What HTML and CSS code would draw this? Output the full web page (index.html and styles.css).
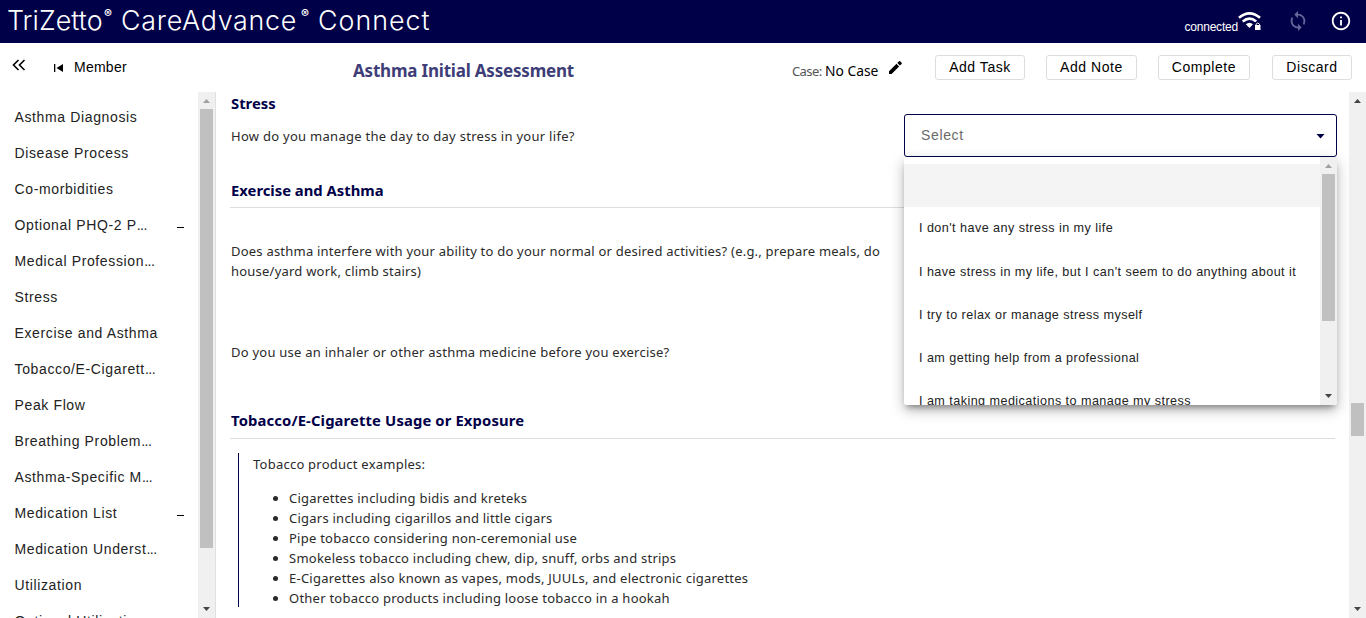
FILE: index.html
```html
<!DOCTYPE html>
<html lang="en">
<head>
<meta charset="utf-8">
<title>Asthma Initial Assessment</title>
<link rel="stylesheet" href="styles.css">
</head>
<body>
<header class="topbar">
  <div class="brand"><span class="w1">TriZetto</span><span class="reg">®</span><span class="w2">CareAdvance</span><span class="reg">®</span><span class="w3">Connect</span></div>
  <div class="status">
    <span class="connected">connected</span>
    <svg class="wifi" width="23" height="21" viewBox="0 0 23 21"><g fill="none" stroke="#fff" stroke-width="2.6"><path d="M1 6.8Q11.500-2.200 22 6.800"/><path d="M4.700 10.500Q11.500 4.800 18.200 10.500"/></g><path fill="#fff" d="M7.800 13.200q3.700-3 7.200 0L11.500 17z"/><rect x="15.200" y="11" width="7.800" height="9" fill="#000048"/><path fill="#fff" d="M17 14h5.500v5H17z"/><path d="M18 14.200v-1q1.700-2.500 3.500 0v1" fill="none" stroke="#fff"/></svg>
    <svg class="sync" width="22" height="22" viewBox="0 0 24 24"><path fill="#66669a" d="M12 4V1L8 5l4 4V6c3.310 0 6 2.690 6 6 0 1.010-.25 1.970-.7 2.800l1.460 1.460C19.540 15.030 20 13.570 20 12c0-4.420-3.580-8-8-8zm0 14c-3.310 0-6-2.690-6-6 0-1.010.25-1.970.7-2.800L5.240 7.740C4.460 8.970 4 10.430 4 12c0 4.420 3.580 8 8 8v3l4-4-4-4v3z"/></svg>
    <svg class="info" width="22" height="22" viewBox="0 0 24 24"><path fill="#fff" d="M11 7h2v2h-2zm0 4h2v6h-2zm1-9C6.480 2 2 6.480 2 12s4.480 10 10 10 10-4.480 10-10S17.520 2 12 2zm0 18c-4.410 0-8-3.590-8-8s3.590-8 8-8 8 3.590 8 8-3.590 8-8 8z"/></svg>
  </div>
</header>
<div class="toolbar">
  <svg class="collapse" width="14" height="12" viewBox="0 0 14 12"><path d="M6.500 1L1.500 6l5 5M12.500 1l-5 5 5 5" fill="none" stroke="#000" stroke-width="1.600"/></svg>
  <svg class="first" width="9" height="8" viewBox="0 0 9 8"><path d="M0 0h1.300v8H0zM9 0v8L2.500 4z"/></svg>
  <span class="member">Member</span>
  <h1 class="title">Asthma Initial Assessment</h1>
  <div class="case"><span class="case-label">Case:</span><span class="case-value">No Case</span>
    <svg class="pencil" width="13" height="13" viewBox="0 0 13 13"><path d="M0 10.300L7.500 2.800l2.600 2.600L2.600 12.900H0zM8.300 2L10 .3q.6-.5 1.200 0l1.400 1.400q.5.600 0 1.200l-1.700 1.700z"/></svg>
  </div>
  <div class="actions"><button class="btn b1">Add Task</button><button class="btn b2">Add Note</button><button class="btn b3">Complete</button><button class="btn b4">Discard</button></div>
</div>
<div class="workspace">
  <nav class="sidebar">
    <ul class="nav">
      <li>Asthma Diagnosis</li><li>Disease Process</li><li>Co-morbidities</li>
      <li><span>Optional PHQ-2 P<span class="dots">...</span></span><i class="minus"></i></li><li><span>Medical Profession<span class="dots">...</span></span></li><li>Stress</li>
      <li>Exercise and Asthma</li><li><span>Tobacco/E-Cigarett<span class="dots">...</span></span></li><li>Peak Flow</li>
      <li><span>Breathing Problem<span class="dots">...</span></span></li><li><span>Asthma-Specific M<span class="dots">...</span></span></li><li>Medication List<i class="minus"></i></li>
      <li><span>Medication Underst<span class="dots">...</span></span></li><li>Utilization</li><li><span>Optional Utilizati<span class="dots">...</span></span></li>
    </ul>
    <div class="bar bar-nav"><i class="up dim"></i><i class="thumb"></i><i class="down"></i></div>
  </nav>
  <main class="content">
    <section class="stress">
      <div class="question">
        <h2>Stress</h2>
        <p class="t q1">How do you manage the day to day stress in your life?</p>
      </div>
      <div class="select">
        <span class="value">Select</span><i class="caret"></i>
        <div class="panel">
          <ul class="options">
            <li class="active"></li>
            <li>I don't have any stress in my life</li>
            <li>I have stress in my life, but I can't seem to do anything about it</li>
            <li>I try to relax or manage stress myself</li>
            <li>I am getting help from a professional</li>
            <li>I am taking medications to manage my stress</li>
          </ul>
          <div class="bar bar-panel"><i class="up dim"></i><i class="thumb"></i><i class="down"></i></div>
        </div>
      </div>
    </section>
    <section class="exercise">
      <h2>Exercise and Asthma</h2>
      <p class="t q2">Does asthma interfere with your ability to do your normal or desired activities? (e.g., prepare meals, do<br>house/yard work, climb stairs)</p>
      <p class="t q3">Do you use an inhaler or other asthma medicine before you exercise?</p>
    </section>
    <section class="tobacco">
      <h2>Tobacco/E-Cigarette Usage or Exposure</h2>
      <div class="note t">
        <p>Tobacco product examples:</p>
        <ul>
          <li>Cigarettes including bidis and kreteks</li>
          <li>Cigars including cigarillos and little cigars</li>
          <li>Pipe tobacco considering non-ceremonial use</li>
          <li>Smokeless tobacco including chew, dip, snuff, orbs and strips</li>
          <li>E-Cigarettes also known as vapes, mods, JUULs, and electronic cigarettes</li>
          <li>Other tobacco products including loose tobacco in a hookah</li>
        </ul>
      </div>
    </section>
  </main>
  <div class="bar bar-main"><i class="up"></i><i class="thumb"></i><i class="down"></i></div>
</div>
</body>
</html>
```
FILE: styles.css
```css
* { box-sizing: border-box; }
body { margin: 0; width: 1366px; height: 618px; overflow: hidden; background: #fff; color: #222; font-family: "Liberation Sans", Arial, sans-serif; display: flex; flex-direction: column; }
h1, h2, p, ul { margin: 0; padding: 0; }
svg { display: block; flex: none; }

.topbar { height: 43px; flex: none; background: #000048; color: #fff; display: flex; justify-content: space-between; }
.brand { font: 350 26.800px/40px Inter, sans-serif; padding-left: 7px; display: flex; white-space: nowrap; }
.brand .reg { font-size: 12px; font-weight: 700; line-height: 28px; width: 9px; }
.w1 { width: 97px; letter-spacing: .1px; }
.w2 { width: 180px; margin-left: 8px; letter-spacing: .75px; }
.w3 { margin-left: 8px; letter-spacing: 1px; }
.status { display: flex; }
.connected { font-size: 12px; line-height: 54px; letter-spacing: -.2px; }
.wifi { margin: 11px 0 0 0; }
.sync { margin: 10px 0 0 26px; }
.info { margin: 10px 14px 0 21px; }

.toolbar { height: 49px; flex: none; display: flex; align-items: flex-start; color: #000; }
.collapse { margin: 16px 0 0 12px; }
.first { margin: 21px 0 0 28px; }
.member { font-size: 14px; line-height: 20px; letter-spacing: .25px; margin: 14px 0 0 11px; width: 279px; }
.title { font: 700 17px/24px "Noto Sans", sans-serif; color: #3d3d78; margin: 16px 0 0; width: 439px; white-space: nowrap; letter-spacing: -.2px; }
.case { display: flex; font: 13.800px/20px "Noto Sans", sans-serif; margin-top: 18px; width: 143px; white-space: nowrap; }
.case-label { color: #555; font-size: 13px; width: 33px; letter-spacing: -.6px; }
.case-value { width: 64px; }
.actions { display: flex; margin-top: 12px; }
.btn { height: 25px; border: 1px solid #ddd; border-radius: 3px; background: #fff; padding: 0 0 1px; color: #000; font: 14px/20px "Liberation Sans", Arial, sans-serif; letter-spacing: .55px; }
.b1 { width: 90px; margin-right: 21px; }
.b2 { width: 91px; margin-right: 21px; }
.b3 { width: 92px; margin-right: 22px; }
.b4 { width: 80px; }

.workspace { height: 526px; display: flex; }
.sidebar { width: 216px; flex: none; display: flex; border-right: 1px solid #e0e0e0; overflow: hidden; }
.nav { width: 198px; list-style: none; padding: 7px 0 0 14.500px; }
.nav li { height: 36px; line-height: 36px; font-size: 14px; letter-spacing: .63px; white-space: nowrap; display: flex; justify-content: space-between; }
.dots { letter-spacing: -.5px; }
.minus { width: 7px; height: 1px; background: #000; margin: 20px 14px 0 0; }

.bar { width: 17px; flex: none; background: #f0f0f0; display: flex; flex-direction: column; align-items: center; }
.bar .thumb { width: 13px; background: #c0c0c0; flex: none; }
.up, .down { width: 7px; height: 4px; background: #444; flex: none; }
.up { clip-path: polygon(0 100%, 50% 0, 100% 100%); margin: 7px 0 6px; }
.down { clip-path: polygon(0 0, 100% 0, 50% 100%); margin: auto 0 7px; }
.dim { background: #a0a0a0; }
.bar-nav .thumb { height: 439px; }
.bar-panel .thumb { height: 147px; }
.bar-main .thumb { height: 33px; margin-top: 294px; }

.content { width: 1133px; flex: none; padding: 0 12px 0 14px; color: #2a2a2a; }
h2 { font: 700 14.800px/20px "Noto Sans", sans-serif; color: #000048; letter-spacing: 0; padding-left: 1px; }
.t { font: 13px/20px "Noto Sans", sans-serif; letter-spacing: .24px; white-space: nowrap; }
.stress { height: 88px; display: flex; justify-content: space-between; }
.question { padding-top: 1px; }
.q1 { padding: 13px 0 0 1px; letter-spacing: .28px; }
.select { position: relative; width: 433px; height: 43px; margin-top: 22px; border: 1.500px solid #000048; border-radius: 3px; display: flex; align-items: center; justify-content: space-between; padding: 0 11px 0 16px; font-size: 14px; letter-spacing: .65px; color: #6a6a6a; }
.value { padding-bottom: 2px; }
.caret { width: 9px; height: 5px; margin-top: 1px; background: #000048; clip-path: polygon(0 0, 100% 0, 50% 100%); }
.panel { position: absolute; z-index: 2; left: -1px; top: 42px; width: 433px; height: 248px; background: #fff; border-radius: 0 0 3px 3px; display: flex; overflow: hidden; color: #222; }
.select::after { content: ""; position: absolute; z-index: 1; left: -1px; top: 42px; width: 433px; height: 248px; border-radius: 0 0 3px 3px; box-shadow: 0 5px 6px -3px rgba(0,0,0,.35), 0 5px 14px rgba(0,0,0,.28); }
.options { list-style: none; flex: 1; padding-top: 7px; }
.options li { height: 43.300px; line-height: 42px; padding-left: 15px; font-size: 12.600px; letter-spacing: .45px; white-space: nowrap; }
.options .active { background: #f4f4f4; }
.exercise h2, .tobacco h2 { border-bottom: 1px solid #dedede; height: 28px; margin-right: 2px; }
.exercise { height: 230px; }
.exercise .q2 { letter-spacing: .22px; }
.tobacco h2 { height: 29px; letter-spacing: .13px; }
.q2 { padding: 33px 0 0 1px; }
.q3 { padding: 61px 0 0 1px; }
.note { border-left: 1px solid #000048; margin: 14px 0 0 8px; padding: 1px 0 0 14px; height: 154px; }
.note ul { padding-left: 36px; margin-top: 14px; }
```
